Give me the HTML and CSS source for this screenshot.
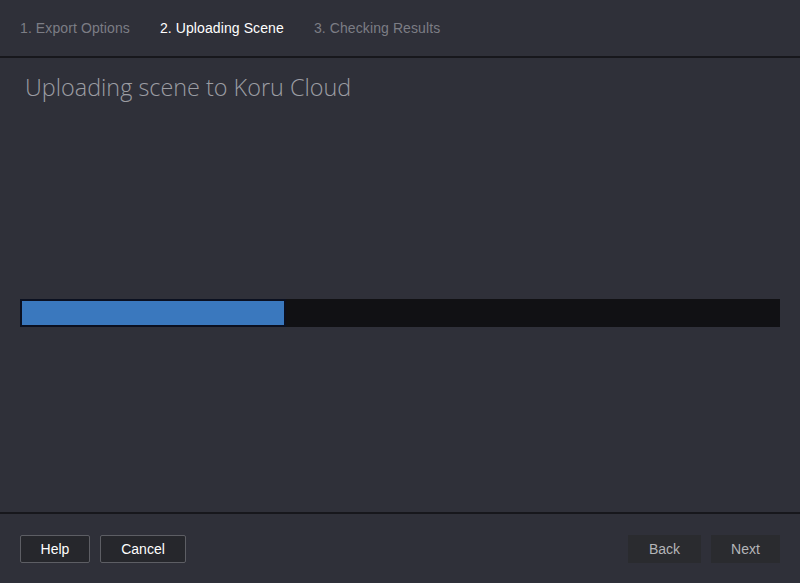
FILE: index.html
```html
<!DOCTYPE html>
<html>
<head>
<meta charset="utf-8">
<link rel="stylesheet" href="styles.css">
</head>
<body>
<div class="app">
  <header class="steps">
    <span class="step">1. Export Options</span>
    <span class="step active">2. Uploading Scene</span>
    <span class="step">3. Checking Results</span>
  </header>
  <main class="content">
    <h1 class="title">Uploading scene to Koru Cloud</h1>
    <div class="progress">
      <div class="progress-fill" style="width: 266px"></div>
    </div>
  </main>
  <footer class="footer">
    <div class="group">
      <button class="btn outline help">Help</button>
      <button class="btn outline cancel">Cancel</button>
    </div>
    <div class="group">
      <button class="btn flat back">Back</button>
      <button class="btn flat next">Next</button>
    </div>
  </footer>
</div>
</body>
</html>
```

FILE: styles.css
```css
html, body {
  margin: 0;
  padding: 0;
  background: #2f3039;
  width: 800px;
  height: 583px;
  overflow: hidden;
}
.app {
  display: flex;
  flex-direction: column;
  height: 583px;
  font-family: "Liberation Sans", Arial, sans-serif;
}
.steps {
  height: 56px;
  border-bottom: 2px solid #17171c;
  display: flex;
  align-items: center;
  gap: 30px;
  padding: 0 20px;
  box-sizing: content-box;
}
.step {
  font-size: 14px;
  color: #7c7d85;
  letter-spacing: 0.1px;
}
.step.active {
  color: #ffffff;
}
.content {
  flex: 1;
  display: flex;
  flex-direction: column;
  padding: 0 20px;
}
.title {
  margin: 12px 0 0 5px;
  font-family: "Open Sans", sans-serif;
  font-weight: 300;
  font-size: 23.4px;
  line-height: 34px;
  color: #9c9da3;
}
.progress {
  margin-top: 195px;
  height: 28px;
  background: #111114;
  display: flex;
}
.progress-fill {
  height: 28px;
  box-sizing: border-box;
  border: 2px solid #0b1020;
  background: #3a78be;
}
.footer {
  height: 71px;
  border-top: 2px solid #17171c;
  display: flex;
  justify-content: space-between;
  align-items: flex-start;
  padding: 21px 20px 0;
  box-sizing: border-box;
}
.group {
  display: flex;
  gap: 10px;
}
.btn {
  font-family: "Liberation Sans", Arial, sans-serif;
  font-size: 14px;
  height: 28px;
  padding: 0;
  cursor: pointer;
}
.btn.outline {
  background: #26272c;
  border: 1px solid #5d5e64;
  border-radius: 2px;
  color: #ffffff;
}
.btn.flat {
  background: #2a2b2f;
  border: none;
  color: #b4b5b8;
}
.help { width: 70px; }
.cancel { width: 86px; }
.back { width: 73px; }
.next { width: 69px; }
```
